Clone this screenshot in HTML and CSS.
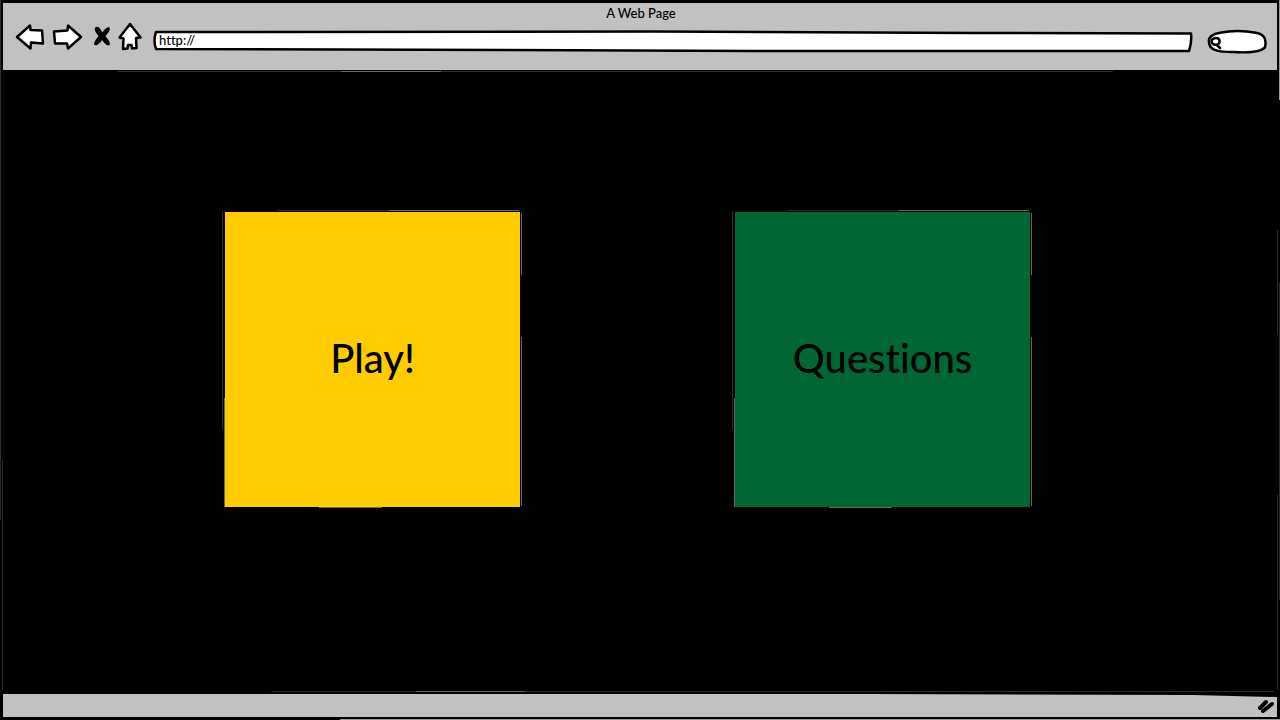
FILE: index.html
```html
<!DOCTYPE html>
<html lang="en">
<head>
<meta charset="utf-8">
<title>A Web Page</title>
<link rel="stylesheet" href="styles.css">
</head>
<body>
<div class="window">
  <svg class="outline" viewBox="0 0 1280 720" preserveAspectRatio="none" aria-hidden="true">
    <path class="trace faint" d="M.500 0V330M.500 330V520M2.500 460V690M1277.500 230V335M1277.500 495V690M1279.500 283V600"/>
    <path class="trace light" d="M1279.500 0V100M340 719.500H1280"/>
  </svg>
  <header class="chrome">
    <h1 class="title">A Web Page</h1>
    <div class="toolbar">
      <button class="tool" type="button" aria-label="Back">
        <svg width="30" height="28" viewBox="0 0 30 28"><path class="ink" d="M2 14 15 2.500 15.500 7 27 7.500 28 20.500 16 19.500 15.500 25.500Z"/></svg>
      </button>
      <button class="tool forward" type="button" aria-label="Forward">
        <svg width="30" height="28" viewBox="0 0 30 28"><path class="ink" d="M29 14 16 2.500 15.500 7.500 2 8.500 3 20.500 15 20.500 16 25.500Z"/></svg>
      </button>
      <button class="tool stop" type="button" aria-label="Stop">
        <svg width="18" height="28" viewBox="0 0 18 28"><path class="solid" d="M3 4C6 3 8 7 9.500 9.500 11 7 14 3 16.500 4.500 18 6.500 14.500 11 12.500 13 14.500 16 18 19 16.500 22 13.500 23.500 10.500 19 9 17 7 20 4 23.500 1.500 22 0 19.500 4 15.500 5.500 13 3 10 0 5.500 3 4Z"/></svg>
      </button>
      <button class="tool home" type="button" aria-label="Home">
        <svg width="24" height="30" viewBox="0 0 24 30"><path class="ink" d="M12 2 1.500 15.500 5.500 16.500 5 27 9.500 26.500 10 23 13.500 23 14 26.500 18.500 26 18 16 22.500 15.500Z"/></svg>
      </button>
      <div class="address">
        <svg class="outline" viewBox="0 0 1040 22" preserveAspectRatio="none" aria-hidden="true"><path class="ink" d="M3 2 500 1.500 820 3 1038 3.500Q1039 12 1036 21L600 21 350 20 3 19Q0 11 3 2Z"/></svg>
        <input class="url" type="text" value="http://" aria-label="Address">
      </div>
      <div class="search">
        <svg class="outline" viewBox="0 0 60 24" preserveAspectRatio="none" aria-hidden="true"><path class="ink" d="M13 3Q30-1 49 3C60 5 59 14 58 19 54 24 40 25 26 24 13 24 2 23 2 13 1 8 6 4 13 3Z"/></svg>
        <svg class="lens" width="12" height="14" viewBox="0 0 12 14" aria-hidden="true"><path class="ink" d="M3 3C6 1 10 2 9.500 6 9 9 4 10 2 7 1 5 2 3 3 3M7 9 10 12"/></svg>
        <input class="query" type="text" aria-label="Search">
      </div>
    </div>
  </header>
  <main class="page">
    <svg class="outline" viewBox="0 0 1280 624" preserveAspectRatio="none" aria-hidden="true">
      <path class="trace faint" d="M115 1.500H1115M270 621.500H1277"/>
      <path class="trace" d="M340 1.500H440M415 621.500H525"/>
    </svg>
    <button class="card play" type="button">
      <svg class="outline" viewBox="0 0 300 300" preserveAspectRatio="none" aria-hidden="true"><path class="trace faint" d="M.500 1V220M55 .500H167"/><path class="trace" d="M167 .500H297M299.500 3V65M299.500 127V296M2.500 188V297M97 297.500H160"/></svg>
      <span class="label">Play!</span>
    </button>
    <button class="card questions" type="button">
      <svg class="outline" viewBox="0 0 300 300" preserveAspectRatio="none" aria-hidden="true"><path class="trace faint" d="M.500 1V220M55 .500H167"/><path class="trace" d="M167 .500H297M299.500 3V65M299.500 127V296M2.500 188V297M97 297.500H160"/></svg>
      <span class="label">Questions</span>
    </button>
  </main>
  <footer class="status">
    <svg class="outline" viewBox="0 0 1274 23" preserveAspectRatio="none" aria-hidden="true"><path class="solid" d="M870 0H1274V3L1190 1Z"/></svg>
    <svg class="grip" width="18" height="16" viewBox="0 0 18 16" aria-hidden="true"><path d="M3 10 9 4M6 13 15 6"/></svg>
  </footer>
</div>
</body>
</html>
```
FILE: styles.css
```css
* { box-sizing: border-box; }
body { margin: 0; background: #000; font-family: Lato, "Open Sans", sans-serif; color: #000; font-variant-ligatures: none; }
button, input { font: inherit; color: inherit; padding: 0; border: 0; background: none; }
button { cursor: pointer; }
svg { display: block; overflow: visible; }
.window { position: relative; display: flex; flex-direction: column; min-height: 100vh; padding: 3px; }
.chrome { padding: 2px 10px 17px 12px; background: #c1c1c1; }
.title { margin: 0; font-size: 13px; line-height: 16px; font-weight: 500; text-align: center; }
.toolbar { display: flex; align-items: center; height: 32px; }
.tool { flex: none; }
.forward { margin-left: 7px; }
.stop { margin-left: 11px; }
.home { margin-left: 7px; }
.ink { fill: #fff; stroke: #000; stroke-width: 2.500px; stroke-linejoin: round; stroke-linecap: round; vector-effect: non-scaling-stroke; }
.solid { fill: #000; }
.address, .search { position: relative; height: 22px; margin-top: 8px; }
.address { flex: 1; margin-left: 11px; }
.search { width: 60px; margin-left: 14px; }
.outline { position: absolute; inset: 0; width: 100%; height: 100%; pointer-events: none; }
.url, .query { position: relative; display: block; width: 100%; height: 100%; font-size: 13px; font-weight: 500; line-height: 20px; outline: 0; }
.url { padding: 0 6px 2px; }
.query { padding: 0 8px 0 18px; }
.lens { position: absolute; left: 3px; top: 6px; }
.page { position: relative; flex: 1; display: flex; justify-content: center; align-items: flex-start; gap: 210px; padding: 140px 26px 40px 0; }
.card { position: relative; width: 300px; height: 300px; padding: 2px 2px 3px 3px; }
.label { display: flex; align-items: center; justify-content: center; height: 100%; padding-bottom: 4px; font-size: 40px; font-weight: 500; line-height: 48px; }
.play .label { background: #fc0; }
.questions .label { background: #063; }
.trace { fill: none; stroke: #666; stroke-width: 1px; }
.faint { stroke: #2c2c2c; }
.light { stroke: #999; }
.status { position: relative; display: flex; justify-content: flex-end; align-items: center; height: 23px; padding-right: 2px; background: #c1c1c1; }
.grip path { fill: none; stroke: #000; stroke-width: 4px; stroke-linecap: round; }
```
